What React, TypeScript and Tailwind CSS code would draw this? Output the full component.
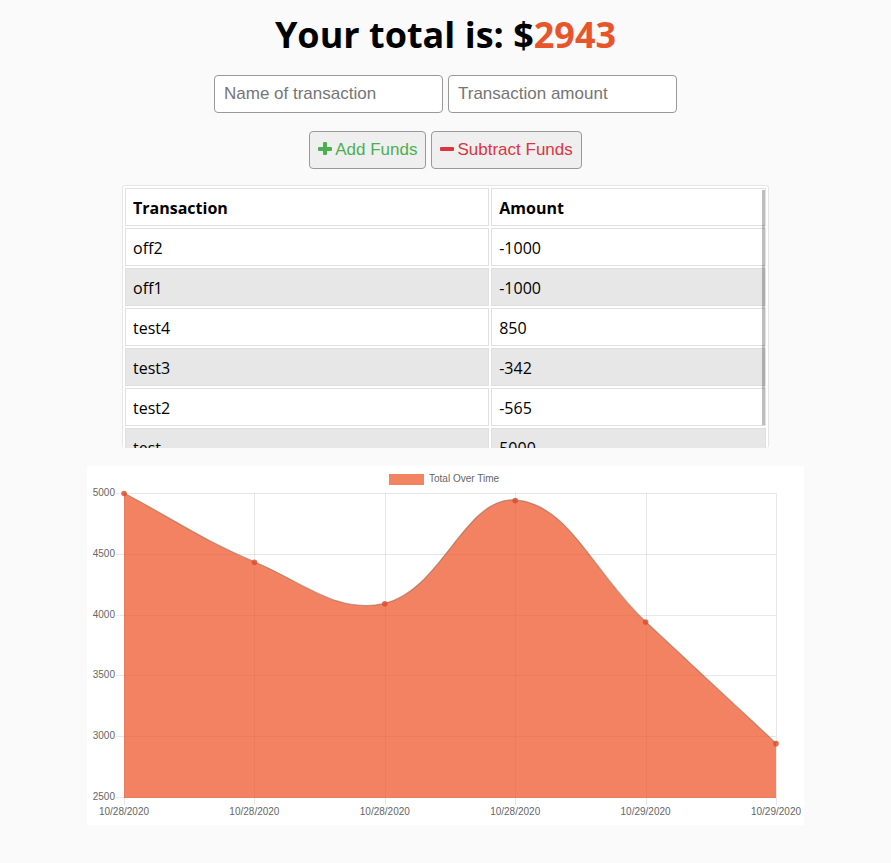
import React from "react";

type Transaction = { name: string; amount: number };

const transactions: Transaction[] = [
  { name: "off2", amount: -1000 },
  { name: "off1", amount: -1000 },
  { name: "test4", amount: 850 },
  { name: "test3", amount: -342 },
  { name: "test2", amount: -565 },
  { name: "test", amount: 5000 },
];

const history = [
  { date: "10/28/2020", total: 5000 },
  { date: "10/28/2020", total: 4435 },
  { date: "10/28/2020", total: 4093 },
  { date: "10/28/2020", total: 4943 },
  { date: "10/29/2020", total: 3943 },
  { date: "10/29/2020", total: 2943 },
];

const ticks = [5000, 4500, 4000, 3500, 3000, 2500];

const area = { left: 37, right: 689, top: 27, bottom: 331 };

const xAt = (i: number) => area.left + (i * (area.right - area.left)) / (history.length - 1);
const yAt = (v: number) => area.top + ((5000 - v) * (area.bottom - area.top)) / 2500;
const crisp = (n: number) => Math.round(n) + 0.5;
const clampY = (y: number) => Math.min(area.bottom, Math.max(area.top, y));

// Smooth spline through the totals, tension 0.4
function buildCurve() {
  const pts = history.map((h, i) => ({ x: xAt(i), y: yAt(h.total) }));
  const controls = pts.map((p, i) => {
    const prev = pts[i - 1] ?? p;
    const next = pts[i + 1] ?? p;
    const d01 = Math.hypot(p.x - prev.x, p.y - prev.y);
    const d12 = Math.hypot(next.x - p.x, next.y - p.y);
    const fa = (0.4 * d01) / (d01 + d12);
    const fb = (0.4 * d12) / (d01 + d12);
    return {
      inX: p.x - fa * (next.x - prev.x),
      inY: clampY(p.y - fa * (next.y - prev.y)),
      outX: p.x + fb * (next.x - prev.x),
      outY: clampY(p.y + fb * (next.y - prev.y)),
    };
  });
  let d = `M${pts[0].x} ${pts[0].y}`;
  for (let i = 1; i < pts.length; i++) {
    const a = controls[i - 1];
    const b = controls[i];
    d += `C${a.outX} ${a.outY} ${b.inX} ${b.inY} ${pts[i].x} ${pts[i].y}`;
  }
  return { d, pts };
}

function TotalChart() {
  const { d, pts } = buildCurve();
  return (
    <svg
      viewBox="0 0 717 359"
      role="img"
      aria-label="Total Over Time"
      className="block w-full font-['Liberation_Sans',Arial,sans-serif] text-[10px]"
    >
      <g stroke="#000" strokeOpacity="0.09">
        {ticks.map((t) => (
          <line key={t} x1={area.left - 8} x2={area.right} y1={crisp(yAt(t))} y2={crisp(yAt(t))} />
        ))}
        {history.map((_, i) => (
          <line key={i} x1={crisp(xAt(i))} x2={crisp(xAt(i))} y1={area.top} y2={area.bottom + 8} />
        ))}
      </g>
      <path d={`${d}L${area.right} ${area.bottom + 1}L${area.left} ${area.bottom + 1}Z`} fill="#ed5224" fillOpacity="0.72" />
      <path d={d} fill="none" stroke="#8a6048" strokeOpacity="0.5" strokeWidth="1.2" />
      {pts.map((p, i) => (
        <circle key={i} cx={p.x} cy={p.y + 0.5} r="2.8" fill="#dc4a28" fillOpacity="0.8" />
      ))}
      <g fill="#666">
        {ticks.map((t) => (
          <text key={t} x={area.left - 9} y={yAt(t) + 3} textAnchor="end">
            {t}
          </text>
        ))}
        {history.map((h, i) => (
          <text key={i} x={xAt(i)} y={349} textAnchor="middle">
            {h.date}
          </text>
        ))}
        <text x={342} y={16}>
          Total Over Time
        </text>
      </g>
      <rect x="302" y="8" width="35" height="11" fill="#f28462" />
    </svg>
  );
}

const fieldClass =
  "h-[38px] w-[229px] rounded-[4px] border border-[#999] bg-white px-[9px] font-['Liberation_Sans',Arial,sans-serif] text-[17px] text-black placeholder:text-[#757575]";
const buttonClass =
  "flex h-[38px] items-center gap-[3px] rounded-[4px] border border-[#999] bg-[#efefef] px-2 font-['Liberation_Sans',Arial,sans-serif] text-[17px]";
const cellClass = "h-[38px] border border-[#e0e0e0] px-[7px] pt-[2px] pb-0 text-left";

export default function App() {
  return (
    <main className="flex min-h-screen flex-col items-center bg-[#fafafa] pb-9 font-['Open_Sans','Noto_Sans',sans-serif] text-black">
      <h1 className="pt-[10px] text-[36px] leading-[50px] font-bold">
        Your total is: $<span className="text-[#e9552b]">2943</span>
      </h1>

      <form className="flex flex-col items-center" onSubmit={(e) => e.preventDefault()}>
        <div className="mt-[15px] flex flex-wrap justify-center gap-[5px]">
          <input type="text" aria-label="Name of transaction" placeholder="Name of transaction" className={fieldClass} />
          <input type="number" aria-label="Transaction amount" placeholder="Transaction amount" className={fieldClass} />
        </div>
        <div className="mt-[18px] flex flex-wrap justify-center gap-[5px]">
          <button type="button" className={`${buttonClass} text-[#4caf50]`}>
            <svg viewBox="0 0 14 16" className="h-4 w-[14px]" fill="currentColor" aria-hidden="true">
              <rect x="5" y="0" width="4" height="13" rx="1" />
              <rect x="0" y="5" width="14" height="4" rx="1" />
            </svg>
            Add Funds
          </button>
          <button type="button" className={`${buttonClass} text-[#d9363e]`}>
            <svg viewBox="0 0 14 16" className="h-4 w-[14px]" fill="currentColor" aria-hidden="true">
              <rect x="0" y="5" width="14" height="4" rx="1" />
            </svg>
            Subtract Funds
          </button>
        </div>
      </form>

      <div className="relative mt-4 w-[647px] max-w-full">
        <div className="h-[263px] overflow-y-auto rounded-[3px] border border-b-0 border-[#e6e6e6] bg-white [scrollbar-width:none]">
          <table className="w-full table-fixed border-separate border-spacing-x-[2px] border-spacing-y-[2px] text-[16px] leading-5">
            <colgroup>
              <col className="w-[57%]" />
              <col />
            </colgroup>
            <thead>
              <tr>
                <th className={`${cellClass} font-bold`}>Transaction</th>
                <th className={`${cellClass} font-bold`}>Amount</th>
              </tr>
            </thead>
            <tbody>
              {transactions.map((t) => (
                <tr key={t.name} className="even:bg-[#e7e7e7]">
                  <td className={cellClass}>{t.name}</td>
                  <td className={cellClass}>{t.amount}</td>
                </tr>
              ))}
            </tbody>
          </table>
        </div>
        <div className="absolute top-[5px] right-1 h-[235px] w-[3px] bg-black/25" />
      </div>

      <section className="mt-[18px] w-[717px] max-w-full bg-white">
        <TotalChart />
      </section>
    </main>
  );
}
